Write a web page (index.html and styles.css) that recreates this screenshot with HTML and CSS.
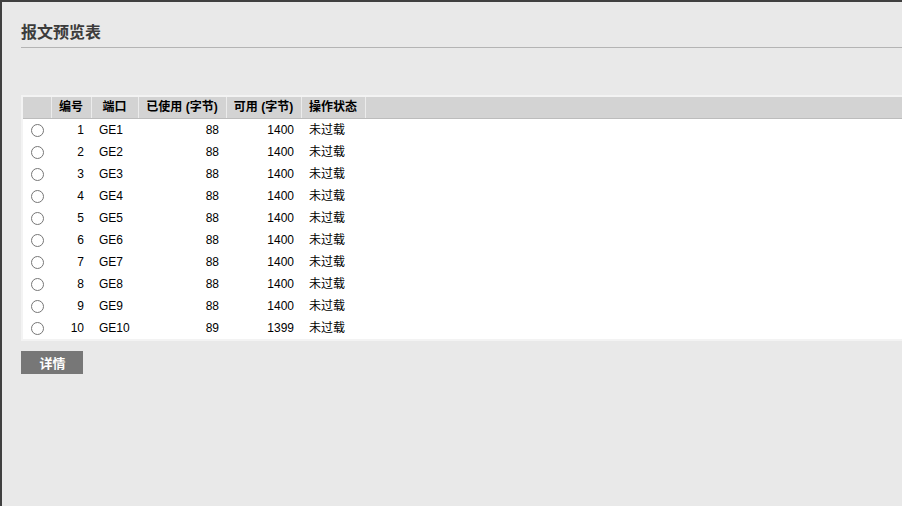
FILE: index.html
```html
<!DOCTYPE html>
<html lang="zh-CN">

<head>
    <meta charset="UTF-8">
    <meta name="viewport" content="width=device-width, initial-scale=1.0">
    <title>报文预览表</title>
    <link rel="stylesheet" href="styles.css">
</head>

<body>
    <div class="page">
        <h1 class="title">报文预览表</h1>

        <div class="table-wrap">
            <table class="grid">
                <colgroup>
                    <col class="c-sel">
                    <col class="c-no">
                    <col class="c-port">
                    <col class="c-used">
                    <col class="c-free">
                    <col class="c-state">
                    <col>
                </colgroup>
                <thead>
                    <tr>
                        <th></th>
                        <th>编号</th>
                        <th>端口</th>
                        <th>已使用 (字节)</th>
                        <th>可用 (字节)</th>
                        <th>操作状态</th>
                        <th class="filler"></th>
                    </tr>
                </thead>
                <tbody>
                    <tr><td class="sel"><input type="radio" name="row"></td><td class="num">1</td><td>GE1</td><td class="num">88</td><td class="num">1400</td><td>未过载</td><td></td></tr>
                    <tr><td class="sel"><input type="radio" name="row"></td><td class="num">2</td><td>GE2</td><td class="num">88</td><td class="num">1400</td><td>未过载</td><td></td></tr>
                    <tr><td class="sel"><input type="radio" name="row"></td><td class="num">3</td><td>GE3</td><td class="num">88</td><td class="num">1400</td><td>未过载</td><td></td></tr>
                    <tr><td class="sel"><input type="radio" name="row"></td><td class="num">4</td><td>GE4</td><td class="num">88</td><td class="num">1400</td><td>未过载</td><td></td></tr>
                    <tr><td class="sel"><input type="radio" name="row"></td><td class="num">5</td><td>GE5</td><td class="num">88</td><td class="num">1400</td><td>未过载</td><td></td></tr>
                    <tr><td class="sel"><input type="radio" name="row"></td><td class="num">6</td><td>GE6</td><td class="num">88</td><td class="num">1400</td><td>未过载</td><td></td></tr>
                    <tr><td class="sel"><input type="radio" name="row"></td><td class="num">7</td><td>GE7</td><td class="num">88</td><td class="num">1400</td><td>未过载</td><td></td></tr>
                    <tr><td class="sel"><input type="radio" name="row"></td><td class="num">8</td><td>GE8</td><td class="num">88</td><td class="num">1400</td><td>未过载</td><td></td></tr>
                    <tr><td class="sel"><input type="radio" name="row"></td><td class="num">9</td><td>GE9</td><td class="num">88</td><td class="num">1400</td><td>未过载</td><td></td></tr>
                    <tr><td class="sel"><input type="radio" name="row"></td><td class="num">10</td><td>GE10</td><td class="num">89</td><td class="num">1399</td><td>未过载</td><td></td></tr>
                </tbody>
            </table>
        </div>

        <button type="button" class="btn">详情</button>
    </div>
</body>

</html>
```

FILE: styles.css
```css
html,
body {
    margin: 0;
    height: 100%;
}

body {
    font-family: "Liberation Sans", Arial, "Noto Sans CJK SC", sans-serif;
    font-size: 12px;
    color: #000;
}

.page {
    box-sizing: border-box;
    min-height: 100%;
    background-color: #e9e9e9;
    border-top: 2px solid #404040;
    border-left: 2px solid #404040;
    padding: 21px 0 0 19px;
    overflow: hidden;
}

.title {
    margin: 0;
    font-size: 16px;
    line-height: 20px;
    font-weight: bold;
    color: #3c3c3c;
    padding-bottom: 4px;
    border-bottom: 1px solid #b4b4b4;
}

.table-wrap {
    margin-top: 47px;
    border: 2px solid #f3f3f3;
    border-right: none;
    background-color: #fff;
}

.grid {
    width: 100%;
    border-collapse: collapse;
    table-layout: fixed;
}

.c-sel { width: 28px; }
.c-no { width: 40px; }
.c-port { width: 47px; }
.c-used { width: 88px; }
.c-free { width: 75px; }
.c-state { width: 64px; }

.grid th {
    height: 21px;
    padding: 0;
    background-color: #d3d3d3;
    border-right: 1px solid #ececec;
    border-bottom: 1px solid #bcbcbc;
    font-weight: bold;
    text-align: center;
    line-height: 21px;
    white-space: nowrap;
}

.grid th.filler {
    border-right: none;
}

.grid td {
    height: 22px;
    padding: 0 8px;
    line-height: 22px;
    white-space: nowrap;
}

.grid td.num {
    text-align: right;
    padding-right: 7px;
}

.grid td.sel {
    padding: 0;
    text-align: center;
}

.sel input {
    margin: 0;
    width: 13px;
    height: 13px;
    vertical-align: middle;
}

.btn {
    display: block;
    margin-top: 10px;
    width: 62px;
    height: 23px;
    padding: 0 0 0 1px;
    border: none;
    background-color: #777;
    color: #fff;
    font-family: "Liberation Sans", Arial, "Noto Sans CJK SC", sans-serif;
    font-size: 13px;
    font-weight: bold;
    cursor: pointer;
}
```
